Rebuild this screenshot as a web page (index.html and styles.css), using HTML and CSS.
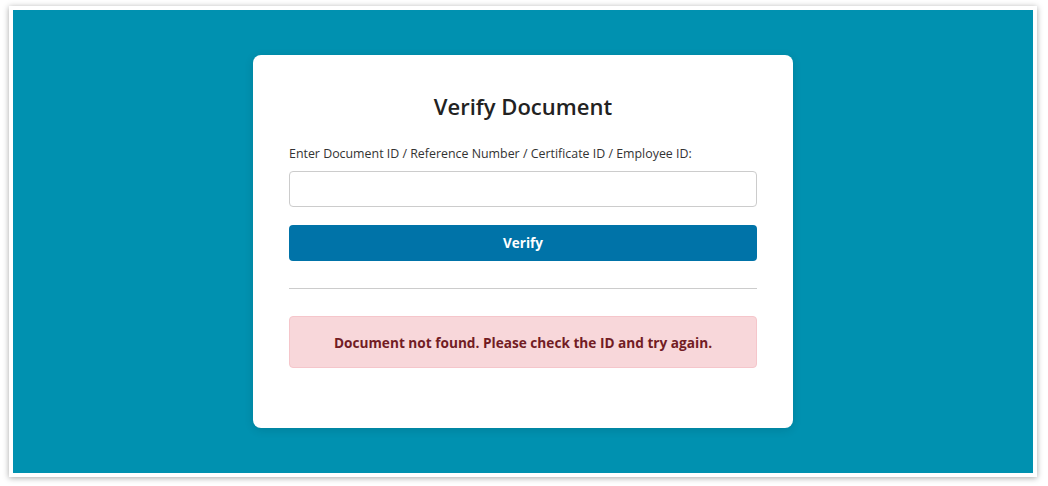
FILE: index.html
```html
<!DOCTYPE html>
<html lang="en">
<head>
<meta charset="utf-8">
<title>Verify Document</title>
<link rel="stylesheet" href="styles.css">
</head>
<body>
<div class="frame">
  <main class="stage">
    <section class="card">
      <h1 class="title">Verify Document</h1>
      <form class="form" onsubmit="return false;">
        <label class="label" for="docid">Enter Document ID / Reference Number / Certificate ID / Employee ID:</label>
        <input class="input" id="docid" type="text">
        <button class="btn" type="submit">Verify</button>
      </form>
      <hr class="divider">
      <div class="alert">Document not found. Please check the ID and try again.</div>
    </section>
  </main>
</div>
</body>
</html>
```
FILE: styles.css
```css
* { box-sizing: border-box; }
html, body { margin: 0; padding: 0; background: #ffffff; }
body {
  padding: 6px 11px 9px 9px;
  font-family: "Open Sans", "Noto Sans", "Liberation Sans", sans-serif;
}
.frame {
  width: 1028px;
  height: 471px;
  padding: 4px;
  background: #ffffff;
  box-shadow: 0 1px 6px rgba(0, 0, 0, 0.35);
}
.stage {
  width: 100%;
  height: 100%;
  background: #0091b0;
  display: flex;
  align-items: center;
  justify-content: center;
}
.card {
  width: 540px;
  height: 373px;
  background: #ffffff;
  border-radius: 8px;
  padding: 36px 36px;
  box-shadow: 0 2px 10px rgba(0, 0, 0, 0.12);
}
.title {
  margin: 0;
  text-align: center;
  font-size: 22px;
  line-height: 30px;
  font-weight: 600;
  color: #222222;
}
.form {
  display: flex;
  flex-direction: column;
  margin-top: 24px;
}
.label {
  font-size: 12.4px;
  line-height: 18px;
  color: #333333;
}
.input {
  margin-top: 8px;
  height: 36px;
  border: 1px solid #cccccc;
  border-radius: 4px;
  padding: 0 10px;
  font-size: 14px;
  font-family: inherit;
  background: #ffffff;
}
.btn {
  margin-top: 18px;
  height: 36px;
  border: none;
  border-radius: 4px;
  background: #0073a8;
  color: #ffffff;
  font-family: inherit;
  font-weight: 700;
  font-size: 13.5px;
}
.divider {
  margin: 27px 0 0 0;
  border: none;
  border-top: 1px solid #cccccc;
  height: 0;
}
.alert {
  margin-top: 27px;
  height: 52px;
  display: flex;
  align-items: center;
  justify-content: center;
  background: #f8d7da;
  border: 1px solid #f5c6cb;
  border-radius: 4px;
  color: #721c24;
  font-weight: 700;
  font-size: 13.65px;
}
```
